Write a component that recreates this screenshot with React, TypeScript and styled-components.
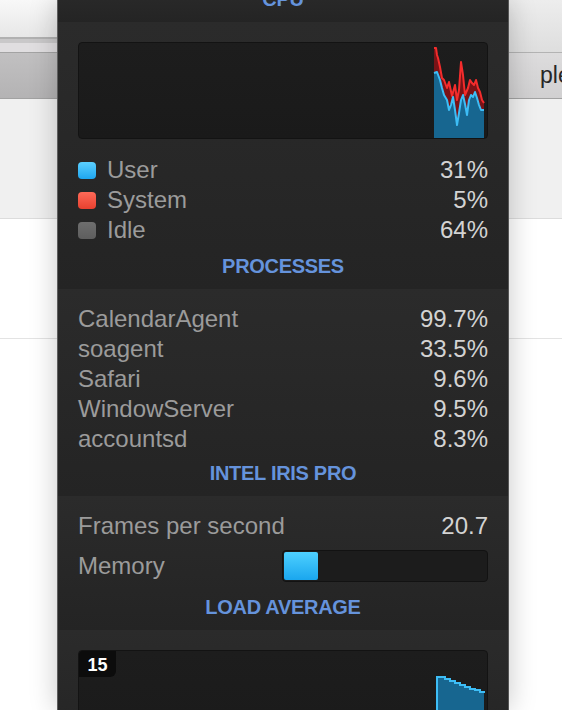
import React from 'react';
import styled, { createGlobalStyle } from 'styled-components';

const Global = createGlobalStyle`
  html, body { margin: 0; padding: 0; }
  body {
    width: 562px;
    height: 710px;
    overflow: hidden;
    font-family: "Liberation Sans", Arial, sans-serif;
  }
`;

const Stage = styled.div`
  position: relative;
  width: 562px;
  height: 710px;
  overflow: hidden;
  background: #ffffff;
`;

/* ---------- background window ---------- */
const Window = styled.div`
  display: flex;
  flex-direction: column;
  width: 100%;
  height: 100%;
`;

const ChromeRow = styled.div<{ $h: number; $line?: string }>`
  display: flex;
  height: ${p => p.$h}px;
  box-sizing: border-box;
  ${p => (p.$line ? `border-bottom: 1px solid ${p.$line};` : '')}
`;

const TitleLeft = styled.div`
  width: 280px;
  display: flex;
  flex-direction: column;
`;

const Strip = styled.div<{ $h: number; $bg: string }>`
  height: ${p => p.$h}px;
  background: ${p => p.$bg};
  flex: none;
`;

const TitleRight = styled.div`
  flex: 1;
  background: linear-gradient(#ededed, #dedede);
  border-bottom: 1px solid #b3b3b3;
`;

const TabLeft = styled.div`
  width: 280px;
  background: linear-gradient(#c1c0c1, #b4b3b4);
`;

const TabRight = styled.div`
  flex: 1;
  display: flex;
  align-items: center;
  padding-left: 260px;
  background: linear-gradient(#dddcdd, #d1d0d1);
  color: #262626;
  font-size: 23px;
  white-space: nowrap;
  overflow: hidden;
`;

const Pane = styled.div<{ $h: number; $bg: string; $line?: string }>`
  height: ${p => p.$h}px;
  flex: none;
  box-sizing: border-box;
  background: ${p => p.$bg};
  ${p => (p.$line ? `border-bottom: 1px solid ${p.$line};` : '')}
`;

/* ---------- dropdown panel ---------- */
const Panel = styled.div`
  position: absolute;
  top: 0;
  left: 57px;
  width: 452px;
  height: 710px;
  box-sizing: border-box;
  border-left: 1px solid #5e5e5e;
  border-right: 1px solid #555555;
  background: #272727;
  box-shadow: 0 0 26px rgba(0, 0, 0, 0.22);
  overflow: hidden;
  display: flex;
  flex-direction: column;
`;

const Section = styled.div<{ $top: number; $lead?: boolean }>`
  display: flex;
  flex-direction: column;
  padding: ${p => p.$top}px 20px 10px;
  margin-top: ${p => (p.$lead ? -14 : 0)}px;
  background: linear-gradient(#2b2b2b, #242424);
  flex: none;
`;

const SectionTitle = styled.div<{ $mt?: number }>`
  height: 26px;
  line-height: 26px;
  margin-top: ${p => p.$mt ?? 6}px;
  text-align: center;
  font-size: 20px;
  font-weight: 700;
  color: #6593dc;
  letter-spacing: -0.3px;
`;

const GraphBox = styled.div<{ $h: number }>`
  position: relative;
  height: ${p => p.$h}px;
  box-sizing: border-box;
  border: 1px solid #131313;
  border-radius: 4px;
  background: linear-gradient(#1d1d1d, #1a1a1a);
  overflow: hidden;
  flex: none;
`;

const GraphSvg = styled.svg`
  display: block;
  width: 100%;
  height: 100%;
`;

const Badge = styled.div`
  position: absolute;
  top: 0;
  left: 0;
  width: 37px;
  height: 26px;
  border-radius: 3px 0 6px 0;
  background: #0c0c0c;
  color: #ffffff;
  font-size: 18px;
  font-weight: 700;
  line-height: 28px;
  text-align: center;
`;

const List = styled.div<{ $gap?: number }>`
  display: flex;
  flex-direction: column;
  margin-top: ${p => p.$gap ?? 0}px;
`;

const Row = styled.div<{ $h?: number; $mt?: number }>`
  display: flex;
  align-items: center;
  justify-content: space-between;
  height: ${p => p.$h ?? 30}px;
  margin-top: ${p => p.$mt ?? 0}px;
  font-size: 24px;
  line-height: 30px;
`;

const Label = styled.div`
  display: flex;
  align-items: center;
  color: #9b9b9b;
  white-space: nowrap;
`;

const Value = styled.div`
  color: #d3d3d3;
  white-space: nowrap;
`;

const swatchBg: Record<string, string> = {
  user: 'linear-gradient(#5cd0ff, #1ea6f0)',
  system: 'linear-gradient(#ff6a58, #e8402f)',
  idle: 'linear-gradient(#6e6e6e, #5e5e5e)',
};

const Swatch = styled.span<{ $kind: string }>`
  width: 18px;
  height: 17px;
  border-radius: 4px;
  margin-right: 11px;
  background: ${p => swatchBg[p.$kind]};
  flex: none;
`;

const Bar = styled.div`
  width: 206px;
  height: 32px;
  box-sizing: border-box;
  border: 1px solid #121212;
  border-radius: 4px;
  padding: 1px;
  background: #1c1c1c;
  display: flex;
`;

const BarFill = styled.div`
  height: 100%;
  border-radius: 2px;
  background: linear-gradient(#4ed0ff, #1aa6ee);
`;

/* ---------- data ---------- */
const legend = [
  { kind: 'user', name: 'User', value: '31%' },
  { kind: 'system', name: 'System', value: '5%' },
  { kind: 'idle', name: 'Idle', value: '64%' },
];

const processes = [
  { name: 'CalendarAgent', value: '99.7%' },
  { name: 'soagent', value: '33.5%' },
  { name: 'Safari', value: '9.6%' },
  { name: 'WindowServer', value: '9.5%' },
  { name: 'accountsd', value: '8.3%' },
];

const redPts: [number, number][] = [
  [434, 48], [436, 48], [437, 55], [438, 58], [440, 67], [442, 78], [444, 80], [447, 88],
  [449, 82], [452, 96], [455, 85], [457, 100], [459, 90], [461, 62], [463, 75], [465, 95],
  [468, 88], [470, 80], [472, 83], [474, 85], [476, 80], [478, 88], [480, 92], [482, 100], [484, 103],
];
const bluePts: [number, number][] = [
  [434, 73], [437, 72], [440, 80], [442, 88], [444, 95], [447, 100], [449, 110], [451, 105],
  [453, 97], [455, 110], [457, 125], [459, 113], [461, 100], [463, 95], [465, 104], [467, 115],
  [469, 100], [471, 95], [473, 97], [475, 92], [477, 98], [479, 105], [481, 110], [484, 110],
];

const line = (pts: [number, number][]) => pts.map(p => p.join(',')).join(' ');
const area = (pts: [number, number][], bottom: number) =>
  `${pts[0][0]},${bottom} ${line(pts)} ${pts[pts.length - 1][0]},${bottom}`;

const loadSteps: [number, number][] = [
  [442, 677], [445, 679], [450, 681], [455, 683], [460, 685], [465, 687], [470, 689], [475, 690], [480, 692], [484, 693],
];
const loadTop = `M437,677 ${loadSteps.map(([x, y]) => `H${x} V${y}`).join(' ')}`;

export default function App() {
  return (
    <>
      <Global />
      <Stage>
        <Window>
          <ChromeRow $h={53}>
            <TitleLeft>
              <Strip $h={37} $bg="linear-gradient(#f8f8f8, #e7e7e7)" />
              <Strip $h={2} $bg="#b1b1b1" />
              <Strip $h={4} $bg="#c9c8c9" />
              <Strip $h={9} $bg="#e0dee0" />
              <Strip $h={1} $bg="#a3a3a3" />
            </TitleLeft>
            <TitleRight />
          </ChromeRow>
          <ChromeRow $h={46} $line="#a2a2a2">
            <TabLeft />
            <TabRight>ple</TabRight>
          </ChromeRow>
          <Pane $h={120} $bg="#f0f0f0" $line="#dcdcdc" />
          <Pane $h={120} $bg="#ffffff" $line="#e3e3e3" />
          <Pane $h={200} $bg="#ffffff" />
        </Window>

        <Panel>
          <Section $top={0} $lead>
            <SectionTitle $mt={0}>CPU</SectionTitle>
          </Section>

          <Section $top={20}>
            <GraphBox $h={97}>
              <GraphSvg viewBox="79 43 408 95" preserveAspectRatio="none">
                <polygon points={area(redPts, 138)} fill="#7a1317" />
                <polygon points={area(bluePts, 138)} fill="#176690" />
                <polyline points={line(redPts)} fill="none" stroke="#f42c2c" strokeWidth={2} strokeLinejoin="round" />
                <polyline points={line(bluePts)} fill="none" stroke="#3dbdf6" strokeWidth={2} strokeLinejoin="round" />
              </GraphSvg>
            </GraphBox>
            <List $gap={16}>
              {legend.map(l => (
                <Row key={l.name}>
                  <Label>
                    <Swatch $kind={l.kind} />
                    {l.name}
                  </Label>
                  <Value>{l.value}</Value>
                </Row>
              ))}
            </List>
            <SectionTitle $mt={8}>PROCESSES</SectionTitle>
          </Section>

          <Section $top={15}>
            <List>
              {processes.map(p => (
                <Row key={p.name}>
                  <Label>{p.name}</Label>
                  <Value>{p.value}</Value>
                </Row>
              ))}
            </List>
            <SectionTitle $mt={6}>INTEL IRIS PRO</SectionTitle>
          </Section>

          <Section $top={15}>
            <List>
              <Row>
                <Label>Frames per second</Label>
                <Value>20.7</Value>
              </Row>
              <Row $h={36} $mt={7}>
                <Label>Memory</Label>
                <Bar>
                  <BarFill style={{ width: '34px' }} />
                </Bar>
              </Row>
            </List>
            <SectionTitle $mt={10}>LOAD AVERAGE</SectionTitle>
          </Section>

          <Section $top={20}>
            <GraphBox $h={100}>
              <GraphSvg viewBox="79 651 408 98" preserveAspectRatio="none">
                <path d={`${loadTop} V749 H437 Z`} fill="#176690" />
                <path d={`M437,749 V677 ${loadTop.slice(9)}`} fill="none" stroke="#3dbdf6" strokeWidth={2} />
              </GraphSvg>
              <Badge>15</Badge>
            </GraphBox>
          </Section>
        </Panel>
      </Stage>
    </>
  );
}
